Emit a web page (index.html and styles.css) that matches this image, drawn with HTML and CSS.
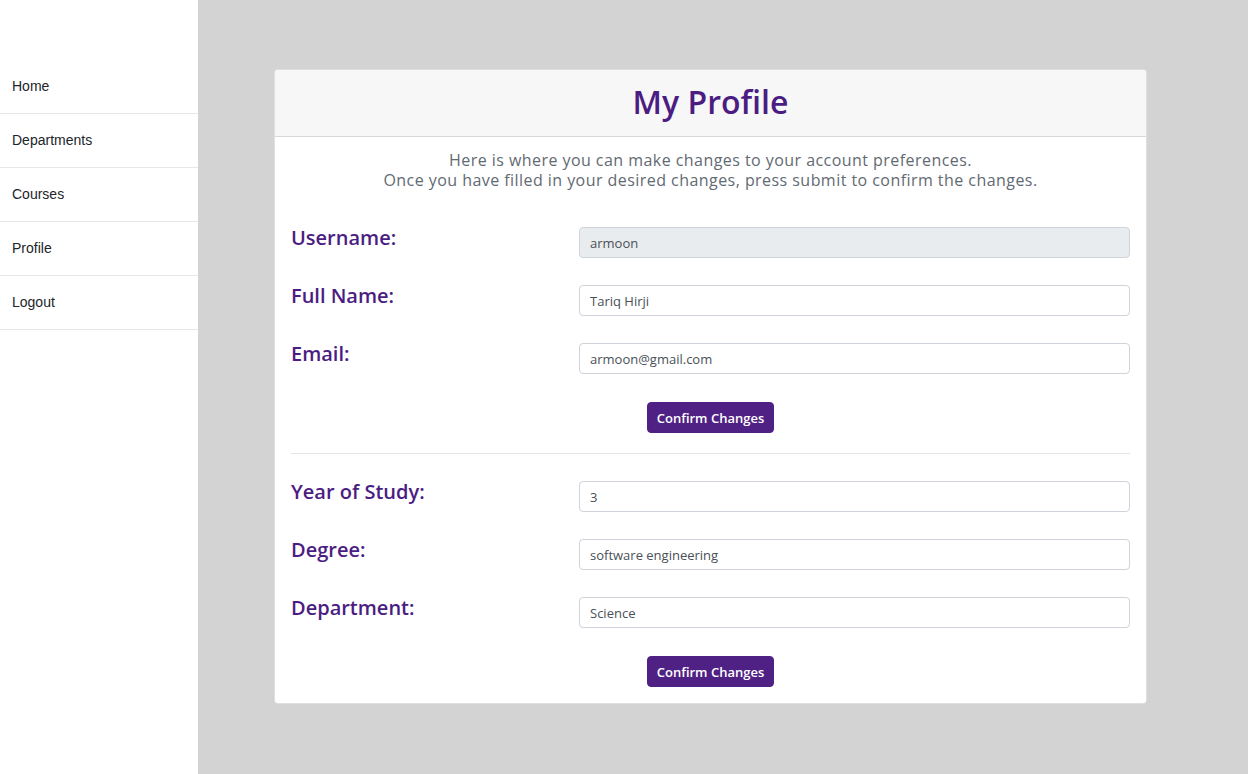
FILE: index.html
```html
<!DOCTYPE html>
<html lang="en">
<head>
<meta charset="utf-8">
<title>My Profile</title>
<link rel="stylesheet" href="styles.css">
</head>
<body>
<div class="layout">
  <nav class="sidebar">
    <a class="nav-item" href="#">Home</a>
    <a class="nav-item" href="#">Departments</a>
    <a class="nav-item" href="#">Courses</a>
    <a class="nav-item" href="#">Profile</a>
    <a class="nav-item" href="#">Logout</a>
  </nav>
  <main class="main">
    <section class="card">
      <header class="card-header">
        <h1 class="title">My Profile</h1>
      </header>
      <div class="card-body">
        <p class="intro">Here is where you can make changes to your account preferences.<br>Once you have filled in your desired changes, press submit to confirm the changes.</p>
        <form class="form">
          <div class="row">
            <label class="label">Username:</label>
            <input class="input" type="text" value="armoon" disabled>
          </div>
          <div class="row">
            <label class="label">Full Name:</label>
            <input class="input" type="text" value="Tariq Hirji">
          </div>
          <div class="row">
            <label class="label">Email:</label>
            <input class="input" type="text" value="armoon@gmail.com">
          </div>
          <div class="actions"><button class="btn" type="button">Confirm Changes</button></div>
        </form>
        <hr class="divider">
        <form class="form">
          <div class="row">
            <label class="label">Year of Study:</label>
            <input class="input" type="text" value="3">
          </div>
          <div class="row">
            <label class="label">Degree:</label>
            <input class="input" type="text" value="software engineering">
          </div>
          <div class="row">
            <label class="label">Department:</label>
            <input class="input" type="text" value="Science">
          </div>
          <div class="actions"><button class="btn" type="button">Confirm Changes</button></div>
        </form>
      </div>
    </section>
  </main>
</div>
</body>
</html>
```
FILE: styles.css
```css
* { box-sizing: border-box; }
html, body { margin: 0; height: 100%; }
body { background: #d3d3d3; font-family: "Open Sans", "Noto Sans", sans-serif; }

.layout { display: flex; min-height: 774px; }

.sidebar {
  width: 198px;
  flex: none;
  background: #ffffff;
  padding-top: 60px;
  display: flex;
  flex-direction: column;
}
.nav-item {
  display: block;
  padding: 15px 12px 16px;
  line-height: 22px;
  font-family: "Liberation Sans", Arial, sans-serif;
  font-size: 14px;
  color: #212529;
  text-decoration: none;
  border-bottom: 1px solid #e6e6e6;
}

.main { flex: 1; padding: 69px 0 0 76px; }

.card {
  width: 873px;
  background: #ffffff;
  border: 1px solid rgba(0,0,0,0.125);
  border-radius: 4px;
}
.card-header {
  height: 67px;
  background: #f7f7f7;
  border-bottom: 1px solid rgba(0,0,0,0.125);
  border-radius: 4px 4px 0 0;
  display: flex;
  align-items: center;
  justify-content: center;
}
.title {
  margin: 0 0 2px;
  font-size: 32px;
  font-weight: 600;
  line-height: 38px;
  color: #4b1d82;
}
.card-body { padding: 13px 16px 16px; }

.intro {
  margin: 0 0 37px;
  text-align: center;
  font-size: 16px;
  font-weight: 500;
  letter-spacing: 0.45px;
  line-height: 20px;
  color: #626a72;
}

.form { display: flex; flex-direction: column; gap: 27px; }
.row {
  display: grid;
  grid-template-columns: 288px 1fr;
  align-items: start;
}
.label {
  font-size: 20px;
  line-height: 24px;
  font-weight: 600;
  color: #4b1d82;
  margin-top: -1px;
}
.input {
  height: 31px;
  width: 100%;
  padding: 0 10px;
  font-family: "Open Sans", "Noto Sans", sans-serif;
  font-size: 13px;
  font-weight: 500;
  color: #495057;
  background: #ffffff;
  border: 1px solid #ced4da;
  border-radius: 4px;
}
.input:disabled { background: #e9ecef; color: #495057; }

.actions { display: flex; justify-content: center; margin-top: 1px; }
.btn {
  height: 31px;
  width: 127px;
  padding: 0;
  white-space: nowrap;
  font-family: "Open Sans", "Noto Sans", sans-serif;
  font-size: 13px;
  font-weight: 600;
  color: #ffffff;
  background: #4f2184;
  border: 1px solid #4f2184;
  border-radius: 4px;
}

.divider {
  margin: 20px 0 27px;
  border: 0;
  border-top: 1px solid rgba(0,0,0,0.1);
}
```
